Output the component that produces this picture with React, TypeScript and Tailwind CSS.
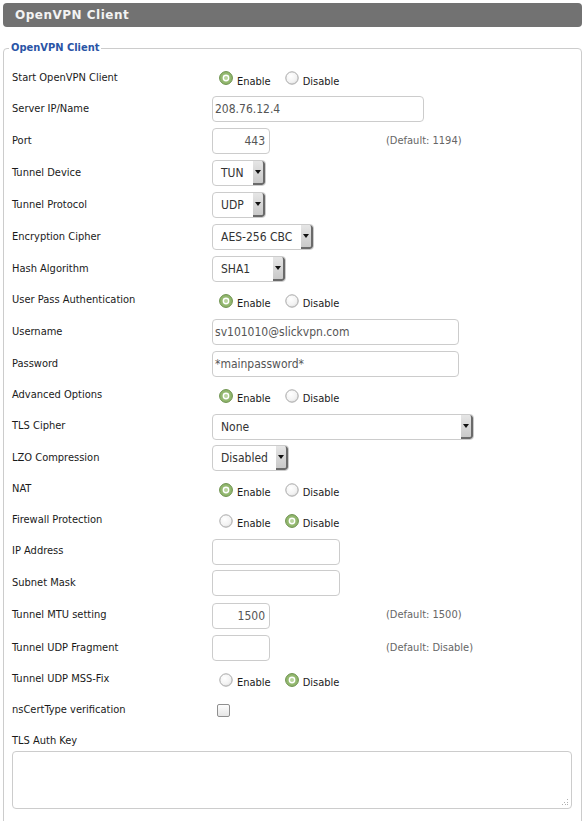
import * as React from "react";

type Row =
  | { label: string; h: string; kind: "radio"; on: boolean }
  | { label: string; h: string; kind: "input"; w: string; value: string; right?: boolean; hint?: string }
  | { label: string; h: string; kind: "select"; w: string; value: string }
  | { label: string; h: string; kind: "check" };

const rows: Row[] = [
  { label: "Start OpenVPN Client", h: "h-[31px]", kind: "radio", on: true },
  { label: "Server IP/Name", h: "h-[32px]", kind: "input", w: "w-[212px]", value: "208.76.12.4" },
  { label: "Port", h: "h-[32px]", kind: "input", w: "w-[58px]", value: "443", right: true, hint: "(Default: 1194)" },
  { label: "Tunnel Device", h: "h-[32px]", kind: "select", w: "w-[54px]", value: "TUN" },
  { label: "Tunnel Protocol", h: "h-[32px]", kind: "select", w: "w-[54px]", value: "UDP" },
  { label: "Encryption Cipher", h: "h-[32px]", kind: "select", w: "w-[102px]", value: "AES-256 CBC" },
  { label: "Hash Algorithm", h: "h-[32px]", kind: "select", w: "w-[74px]", value: "SHA1" },
  { label: "User Pass Authentication", h: "h-[31px]", kind: "radio", on: true },
  { label: "Username", h: "h-[32px]", kind: "input", w: "w-[247px]", value: "sv101010@slickvpn.com" },
  { label: "Password", h: "h-[32px]", kind: "input", w: "w-[247px]", value: "*mainpassword*" },
  { label: "Advanced Options", h: "h-[31px]", kind: "radio", on: true },
  { label: "TLS Cipher", h: "h-[31px]", kind: "select", w: "w-[262px]", value: "None" },
  { label: "LZO Compression", h: "h-[32px]", kind: "select", w: "w-[77px]", value: "Disabled" },
  { label: "NAT", h: "h-[31px]", kind: "radio", on: true },
  { label: "Firewall Protection", h: "h-[31px]", kind: "radio", on: false },
  { label: "IP Address", h: "h-[31px]", kind: "input", w: "w-[128px]", value: "" },
  { label: "Subnet Mask", h: "h-[32px]", kind: "input", w: "w-[128px]", value: "" },
  { label: "Tunnel MTU setting", h: "h-[33px]", kind: "input", w: "w-[58px]", value: "1500", right: true, hint: "(Default: 1500)" },
  { label: "Tunnel UDP Fragment", h: "h-[32px]", kind: "input", w: "w-[58px]", value: "", right: true, hint: "(Default: Disable)" },
  { label: "Tunnel UDP MSS-Fix", h: "h-[31px]", kind: "radio", on: false },
  { label: "nsCertType verification", h: "h-[30px]", kind: "check" },
];

function Radio({ checked }: { checked: boolean }) {
  return (
    <svg width="14" height="14" viewBox="0 0 14 14" className="shrink-0">
      <defs>
        <radialGradient id="off" cx="40%" cy="35%" r="70%">
          <stop offset="0%" stopColor="#ffffff" />
          <stop offset="70%" stopColor="#f2f2f2" />
          <stop offset="100%" stopColor="#d6d6d6" />
        </radialGradient>
      </defs>
      {checked ? (
        <>
          <circle cx="7" cy="7" r="6.4" fill="#93b86f" stroke="#6a8f4a" strokeWidth="1" />
          <circle cx="7" cy="7" r="3.4" fill="#ffffff" />
          <circle cx="7" cy="7" r="2" fill="#b9d49c" />
        </>
      ) : (
        <circle cx="7" cy="7" r="6.2" fill="url(#off)" stroke="#a8a8a8" strokeWidth="1" />
      )}
    </svg>
  );
}

function RadioPair({ on }: { on: boolean }) {
  return (
    <div className="flex items-center pl-[7px]">
      <Radio checked={on} />
      <span className="mt-[8px] ml-[4px]">Enable</span>
      <span className="ml-[14px]">
        <Radio checked={!on} />
      </span>
      <span className="mt-[8px] ml-[4px]">Disable</span>
    </div>
  );
}

function Select({ w, value }: { w: string; value: string }) {
  return (
    <div className={`${w} h-[26px] flex border border-[#cccccc] rounded-[4px] bg-white overflow-hidden`}>
      <span className="flex-1 pl-[8px] flex items-center text-[12px] text-[#333]">{value}</span>
      <div className="w-[12px] flex items-center justify-center bg-gradient-to-b from-[#e6e6e6] to-[#c9c9c9] border-r-2 border-b-2 border-[#6a6a6a] rounded-r-[3px]">
        <svg width="6" height="4" viewBox="0 0 6 4">
          <path d="M0 0H6L3 4Z" fill="#111" />
        </svg>
      </div>
    </div>
  );
}

export default function App() {
  return (
    <div
      className="bg-white h-[821px] overflow-hidden px-[3px] pt-[3px] text-[11px] text-[#1a1a1a]"
      style={{ fontFamily: '"DejaVu Sans Condensed", "DejaVu Sans", sans-serif' }}
    >
      <div className="h-[24px] bg-[#727272] rounded-[4px] flex items-center pl-[12px]">
        <span
          className="text-[12px] font-bold text-[#f3f3f3] tracking-[0.5px]"
          style={{ fontFamily: '"DejaVu Sans", sans-serif' }}
        >
          OpenVPN Client
        </span>
      </div>

      <fieldset className="mt-[14px] border border-[#cccccc] rounded-[4px] px-[5px] pt-[7px] pb-[40px]">
        <legend className="px-[2px] leading-[14px] font-bold text-[#2a55a6] text-[11px]">OpenVPN Client</legend>
        <div className="pl-[3px] pr-[4px]">
          {rows.map((r, i) => (
            <div key={r.label} className={`${r.h} flex items-center ${i === 0 ? "pt-[1px]" : ""}`}>
              <div className="w-[200px] shrink-0">{r.label}</div>
              {r.kind === "radio" && <RadioPair on={r.on} />}
              {r.kind === "input" && (
                <div className="flex items-center">
                  <div className="w-[174px]">
                    <div
                      className={`${r.w} h-[26px] border border-[#cccccc] rounded-[4px] bg-white flex items-center text-[12px] text-[#555] ${
                        r.right ? "justify-end pr-[4px]" : "pl-[2px]"
                      }`}
                    >
                      {r.value}
                    </div>
                  </div>
                  {r.hint && <span className="text-[#666]">{r.hint}</span>}
                </div>
              )}
              {r.kind === "select" && <Select w={r.w} value={r.value} />}
              {r.kind === "check" && (
                <div className="ml-[5px] w-[13px] h-[13px] rounded-[2px] border border-[#8f8f8f] bg-gradient-to-b from-[#fdfdfd] to-[#e6e6e6]" />
              )}
            </div>
          ))}
          <div className="pt-[9px] leading-[14px]">TLS Auth Key</div>
          <div className="relative mt-[3px] h-[58px] border border-[#cccccc] rounded-[4px] bg-white">
            <svg width="8" height="8" viewBox="0 0 8 8" className="absolute right-[2px] bottom-[2px]">
              <g fill="#b0b0b0">
                <rect x="6" y="1" width="1" height="1" />
                <rect x="3" y="4" width="1" height="1" />
                <rect x="6" y="4" width="1" height="1" />
                <rect x="1" y="6" width="1" height="1" />
                <rect x="4" y="6" width="1" height="1" />
                <rect x="6" y="6" width="1" height="1" />
              </g>
            </svg>
          </div>
        </div>
      </fieldset>
    </div>
  );
}
